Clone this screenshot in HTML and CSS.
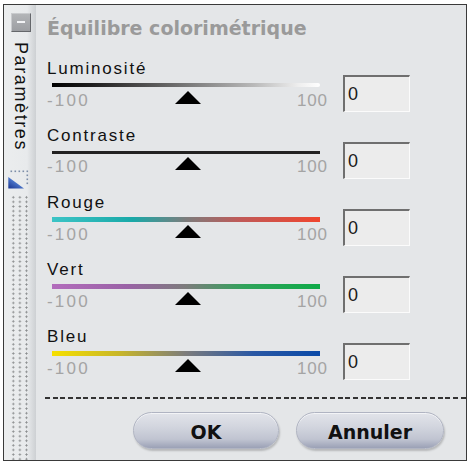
FILE: index.html
```html
<!DOCTYPE html>
<html lang="fr">
<head>
<meta charset="utf-8">
<title>Équilibre colorimétrique</title>
<link rel="stylesheet" href="styles.css">
</head>
<body>
<div class="window">
  <aside class="sidebar">
    <div class="collapse"><span class="minus"></span></div>
    <div class="tab-label">Paramètres</div>
    <svg class="corner" width="24" height="24" viewBox="0 0 24 24">
      <defs>
        <linearGradient id="cg" x1="0" y1="1" x2="0.6" y2="0.3">
          <stop offset="0" stop-color="#1a3590"/>
          <stop offset="1" stop-color="#5a88da"/>
        </linearGradient>
      </defs>
      <g fill="#7d8ea8">
        <rect x="4.5" y="2.5" width="1.6" height="1.6"/>
        <rect x="8.5" y="2.5" width="1.6" height="1.6"/>
        <rect x="12.5" y="2.5" width="1.6" height="1.6"/>
        <rect x="16.5" y="2.5" width="1.6" height="1.6"/>
        <rect x="20.5" y="2.5" width="1.6" height="1.6"/>
        <rect x="20.5" y="6.5" width="1.6" height="1.6"/>
        <rect x="20.5" y="10.5" width="1.6" height="1.6"/>
        <rect x="20.5" y="14.5" width="1.6" height="1.6"/>
      </g>
      <polygon points="2.3,9 2.3,20.5 18,20.5" fill="url(#cg)"/>
    </svg>
    <div class="dots"></div>
  </aside>
  <main class="panel">
    <h1 class="title">Équilibre colorimétrique</h1>
    <div class="rows">
      <div class="row">
        <div class="slider">
          <div class="label">Luminosité</div>
          <div class="track track-lum"></div>
          <div class="scale">
            <span class="min">-100</span>
            <svg class="thumb" width="26" height="13" viewBox="0 0 26 13"><polygon points="13,0 26,13 0,13" fill="#000"/></svg>
            <span class="max">100</span>
          </div>
        </div>
        <div class="field">0</div>
      </div>
      <div class="row">
        <div class="slider">
          <div class="label">Contraste</div>
          <div class="track track-con"></div>
          <div class="scale">
            <span class="min">-100</span>
            <svg class="thumb" width="26" height="13" viewBox="0 0 26 13"><polygon points="13,0 26,13 0,13" fill="#000"/></svg>
            <span class="max">100</span>
          </div>
        </div>
        <div class="field">0</div>
      </div>
      <div class="row">
        <div class="slider">
          <div class="label">Rouge</div>
          <div class="track track-red"></div>
          <div class="scale">
            <span class="min">-100</span>
            <svg class="thumb" width="26" height="13" viewBox="0 0 26 13"><polygon points="13,0 26,13 0,13" fill="#000"/></svg>
            <span class="max">100</span>
          </div>
        </div>
        <div class="field">0</div>
      </div>
      <div class="row">
        <div class="slider">
          <div class="label">Vert</div>
          <div class="track track-green"></div>
          <div class="scale">
            <span class="min">-100</span>
            <svg class="thumb" width="26" height="13" viewBox="0 0 26 13"><polygon points="13,0 26,13 0,13" fill="#000"/></svg>
            <span class="max">100</span>
          </div>
        </div>
        <div class="field">0</div>
      </div>
      <div class="row">
        <div class="slider">
          <div class="label">Bleu</div>
          <div class="track track-blue"></div>
          <div class="scale">
            <span class="min">-100</span>
            <svg class="thumb" width="26" height="13" viewBox="0 0 26 13"><polygon points="13,0 26,13 0,13" fill="#000"/></svg>
            <span class="max">100</span>
          </div>
        </div>
        <div class="field">0</div>
      </div>
    </div>
    <div class="sep"></div>
    <div class="buttons">
      <button class="btn btn-ok">OK</button>
      <button class="btn btn-cancel">Annuler</button>
    </div>
  </main>
</div>
</body>
</html>
```
FILE: styles.css
```css
html, body {
  margin: 0;
  padding: 0;
  background: #ffffff;
}

.window {
  box-sizing: border-box;
  margin: 4px 0 0 3px;
  width: 464px;
  height: 457px;
  border: 1px solid #3a3a3a;
  display: flex;
  background: #e4e6e8;
  overflow: hidden;
}

/* ---------- sidebar ---------- */
.sidebar {
  width: 32px;
  flex: none;
  display: flex;
  flex-direction: column;
  background: linear-gradient(to right, #ebedee 0%, #e8eaec 72%, #cdd0d3 100%);
}

.collapse {
  box-sizing: border-box;
  width: 20px;
  height: 19px;
  margin: 8px 0 0 7px;
  background: linear-gradient(#b3b5b8, #9c9ea2);
  border: 1px solid;
  border-color: #c9cbce #65676b #65676b #c9cbce;
  display: flex;
  align-items: center;
  justify-content: center;
}

.minus {
  width: 8px;
  height: 2px;
  margin-bottom: 2px;
  background: #f2f3f5;
}

.tab-label {
  writing-mode: vertical-rl;
  font-family: "Liberation Sans", Arial, sans-serif;
  font-size: 18px;
  line-height: 22px;
  letter-spacing: 1.6px;
  color: #111;
  margin: 10px 0 0 6px;
  width: 22px;
}

.corner {
  display: block;
  margin: 17px 0 0 2px;
}

.dots {
  flex: 1;
  width: 20px;
  margin: 3px 0 0 6px;
  background-image: radial-gradient(circle at center, #8a8c8e 0.8px, transparent 1.3px);
  background-size: 6.6px 4.6px;
}

/* ---------- main panel ---------- */
.panel {
  flex: 1;
  padding: 12px 0 0 11px;
  display: flex;
  flex-direction: column;
}

.title {
  margin: 0;
  font-family: "DejaVu Sans", Verdana, sans-serif;
  font-weight: bold;
  font-size: 19px;
  line-height: 22px;
  height: 22px;
  color: #9a9a9a;
}

.rows {
  margin-top: 20px;
  display: flex;
  flex-direction: column;
  gap: 14px;
}

.row {
  display: flex;
  align-items: flex-start;
}

.slider {
  width: 296px;
  flex: none;
}

.label {
  font-family: "Liberation Sans", Arial, sans-serif;
  font-size: 17px;
  line-height: 20px;
  letter-spacing: 1.8px;
  color: #111;
}

.track {
  margin: 4px 0 0 5px;
  width: 268px;
  height: 4px;
}

.track-lum {
  background: linear-gradient(to right, #000 0%, #1e1e1e 15%, #6a6a6a 45%, #b8b8b8 75%, #eeeeee 92%, #ffffff 100%);
  border-radius: 0 2px 2px 0;
}

.track-con {
  height: 3px;
  margin-top: 5px;
  margin-bottom: -1px;
  background: #222;
}

.track-red {
  height: 5px;
  background: linear-gradient(to right, #3cc4c6 0%, #19a9a8 30%, #7c7c7c 50%, #c05a58 70%, #f0452e 100%);
}

.track-green {
  height: 5px;
  background: linear-gradient(to right, #b26cbc 0%, #9a62a6 28%, #7c7c7c 50%, #2fa35a 72%, #0eaa48 100%);
}

.track-blue {
  height: 5px;
  background: linear-gradient(to right, #f6e000 0%, #c8b628 25%, #7c7c7c 50%, #2a58a4 75%, #0a4aa8 100%);
}

.track-red, .track-green, .track-blue {
  margin-bottom: -1px;
}

.scale {
  margin-top: 4px;
  width: 280px;
  height: 20px;
  display: grid;
  grid-template-columns: 1fr 26px 1fr;
  align-items: start;
  font-family: "Liberation Sans", Arial, sans-serif;
  font-size: 17px;
  line-height: 20px;
  color: #a4a4a4;
}

.thumb {
  display: block;
  margin-left: 1px;
}

.min {
  letter-spacing: 2.2px;
}

.max {
  text-align: right;
  letter-spacing: 0.8px;
  margin-right: -0.8px;
}

.field {
  box-sizing: border-box;
  margin-top: 16px;
  width: 67px;
  height: 37px;
  background: #ececec;
  border-style: solid;
  border-width: 2px 1px 1px 2px;
  border-color: #6f6f6f #fbfbfb #fbfbfb #6f6f6f;
  padding: 7px 0 0 3px;
  font-family: "Liberation Sans", Arial, sans-serif;
  font-size: 18px;
  line-height: 21px;
  color: #1a1a1a;
}

.sep {
  margin: 17px 0 0 -2px;
  height: 2px;
  background: repeating-linear-gradient(to right, #333 0 5px, transparent 5px 7.7px);
}

.buttons {
  margin-top: 13px;
  display: flex;
  justify-content: flex-end;
  gap: 17px;
  padding-right: 22px;
}

.btn {
  box-sizing: border-box;
  height: 37px;
  border: 1px solid #b0b4c2;
  border-radius: 19px;
  padding: 3px 0 0 0;
  margin: 0;
  line-height: 32px;
  font-family: "DejaVu Sans", Verdana, sans-serif;
  font-weight: bold;
  font-size: 19px;
  color: #111;
  text-align: center;
  background: linear-gradient(#e2e4ea 0%, #d2d5de 40%, #c0c4d1 75%, #9ba1b6 100%);
  box-shadow: 1px 2px 2px rgba(0, 0, 0, 0.2), inset 0 1px 0 rgba(255, 255, 255, 0.6);
}

.btn-ok {
  width: 146px;
}

.btn-cancel {
  width: 148px;
}
```
